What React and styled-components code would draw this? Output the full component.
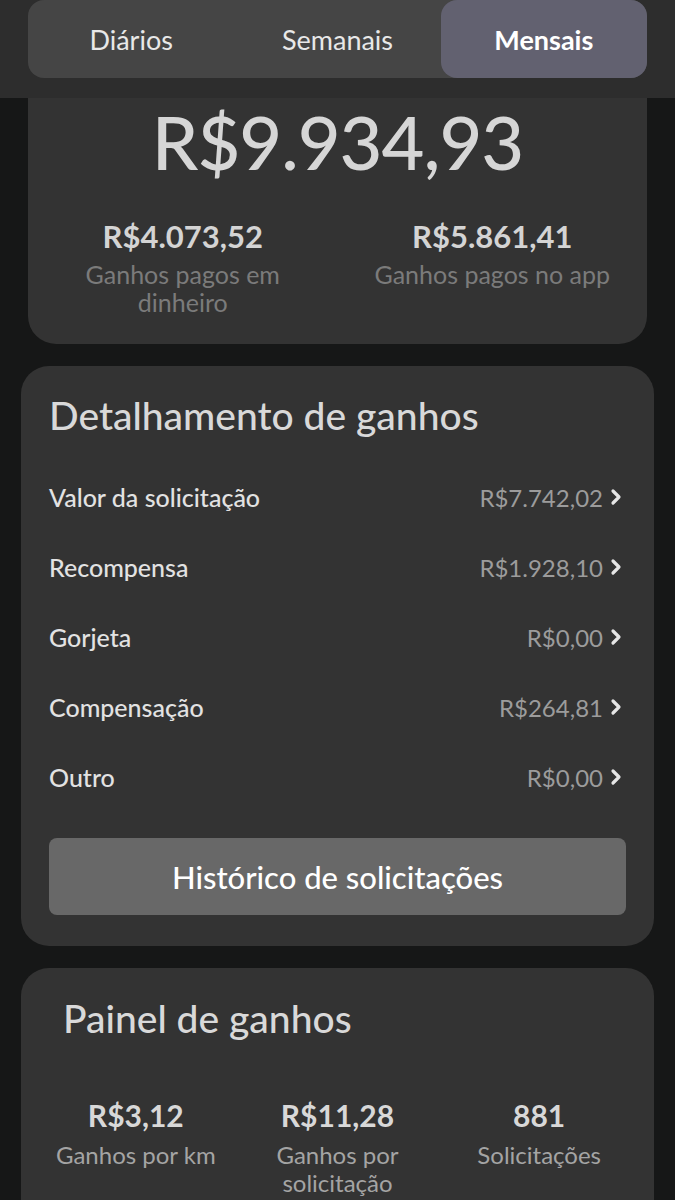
import React from 'react';
import styled, { createGlobalStyle } from 'styled-components';

const GlobalStyle = createGlobalStyle`
  html, body {
    margin: 0;
    padding: 0;
    background: #161717;
    font-family: Lato, "Open Sans", sans-serif;
  }
  * { box-sizing: border-box; }
`;

const Page = styled.div`
  width: 675px;
  min-height: 1200px;
  background: #161717;
  overflow: hidden;
`;

const Header = styled.div`
  background: #2d2d2d;
  padding: 0 28px 20px;
`;

const Segmented = styled.div`
  display: grid;
  grid-template-columns: 1fr 1fr 1fr;
  height: 78px;
  background: #454545;
  border-radius: 16px;
`;

const Tab = styled.div`
  display: flex;
  align-items: center;
  justify-content: center;
  border-radius: 16px;
  font-size: 27px;
  color: ${p => (p.$active ? '#ffffff' : '#e8e8e8')};
  font-weight: ${p => (p.$active ? 700 : 400)};
  background: ${p => (p.$active ? '#626170' : 'transparent')};
`;

const Main = styled.div`
  display: flex;
  flex-direction: column;
  gap: 22px;
  padding: 0 21px;
`;

const SummaryCard = styled.div`
  margin: 0 7px;
  background: #333333;
  border-radius: 0 0 28px 28px;
  padding-bottom: 28px;
`;

const BigAmount = styled.div`
  text-align: center;
  font-size: 74px;
  line-height: 88px;
  color: #d6d6d6;
  font-weight: 500;
  letter-spacing: -1px;
`;

const SplitRow = styled.div`
  display: grid;
  grid-template-columns: 1fr 1fr;
  margin-top: 32px;
`;

const SplitCol = styled.div`
  padding: 0 30px;
  text-align: center;
`;

const SplitValue = styled.div`
  font-size: 31px;
  line-height: 36px;
  font-weight: 700;
  color: #d4d4d4;
  margin-bottom: 6px;
`;

const SplitLabel = styled.div`
  font-size: 25px;
  line-height: 28px;
  color: #7b7b7b;
`;

const Card = styled.div`
  background: #333333;
  border-radius: 28px;
  padding: ${p => p.$pad || '27px 28px 31px'};
`;

const CardTitle = styled.h2`
  margin: 0;
  font-size: 39px;
  line-height: 44px;
  font-weight: 500;
  color: #d9d9d9;
  padding-left: ${p => p.$indent || '0'};
`;

const Rows = styled.div`
  margin-top: 25px;
  display: flex;
  flex-direction: column;
`;

const Row = styled.div`
  height: 70px;
  display: flex;
  align-items: center;
  justify-content: space-between;
`;

const RowLabel = styled.span`
  font-size: 25px;
  color: #e2e2e2;
  font-weight: 500;
`;

const RowValue = styled.span`
  display: flex;
  align-items: center;
  gap: 7px;
  font-size: 24px;
  color: #9c9c9c;
  padding-right: 4px;
`;

const Button = styled.button`
  margin-top: 26px;
  width: 100%;
  height: 77px;
  border: none;
  border-radius: 8px;
  background: #686868;
  color: #ffffff;
  font-family: inherit;
  font-size: 31px;
  font-weight: 500;
`;

const Stats = styled.div`
  margin-top: 55px;
  display: grid;
  grid-template-columns: repeat(3, 1fr);
  padding: 0 14px;
`;

const Stat = styled.div`
  text-align: center;
`;

const StatValue = styled.div`
  font-size: 30px;
  line-height: 40px;
  font-weight: 700;
  color: #d8d8d8;
  margin-bottom: 6px;
`;

const StatLabel = styled.div`
  font-size: 24px;
  line-height: 28px;
  color: #a4a4a4;
  padding: 0 12px;
`;

const Chevron = () => (
  <svg width="12" height="18" viewBox="0 0 12 18">
    <polyline points="3,3 9,9 3,15" fill="none" stroke="#e6e6e6" strokeWidth="3.2" strokeLinecap="round" strokeLinejoin="round" />
  </svg>
);

const breakdown = [
  ['Valor da solicitação', 'R$7.742,02'],
  ['Recompensa', 'R$1.928,10'],
  ['Gorjeta', 'R$0,00'],
  ['Compensação', 'R$264,81'],
  ['Outro', 'R$0,00'],
];

const stats = [
  ['R$3,12', 'Ganhos por km'],
  ['R$11,28', 'Ganhos por solicitação'],
  ['881', 'Solicitações'],
];

export default function App() {
  return (
    <Page>
      <GlobalStyle />
      <Header>
        <Segmented>
          <Tab>Diários</Tab>
          <Tab>Semanais</Tab>
          <Tab $active>Mensais</Tab>
        </Segmented>
      </Header>
      <Main>
        <SummaryCard>
          <BigAmount>R$9.934,93</BigAmount>
          <SplitRow>
            <SplitCol>
              <SplitValue>R$4.073,52</SplitValue>
              <SplitLabel>Ganhos pagos em dinheiro</SplitLabel>
            </SplitCol>
            <SplitCol>
              <SplitValue>R$5.861,41</SplitValue>
              <SplitLabel>Ganhos pagos no app</SplitLabel>
            </SplitCol>
          </SplitRow>
        </SummaryCard>

        <Card>
          <CardTitle>Detalhamento de ganhos</CardTitle>
          <Rows>
            {breakdown.map(([label, value]) => (
              <Row key={label}>
                <RowLabel>{label}</RowLabel>
                <RowValue>
                  {value}
                  <Chevron />
                </RowValue>
              </Row>
            ))}
          </Rows>
          <Button>Histórico de solicitações</Button>
        </Card>

        <Card $pad="28px 0 40px">
          <CardTitle $indent="42px">Painel de ganhos</CardTitle>
          <Stats>
            {stats.map(([value, label]) => (
              <Stat key={label}>
                <StatValue>{value}</StatValue>
                <StatLabel>{label}</StatLabel>
              </Stat>
            ))}
          </Stats>
        </Card>
      </Main>
    </Page>
  );
}
